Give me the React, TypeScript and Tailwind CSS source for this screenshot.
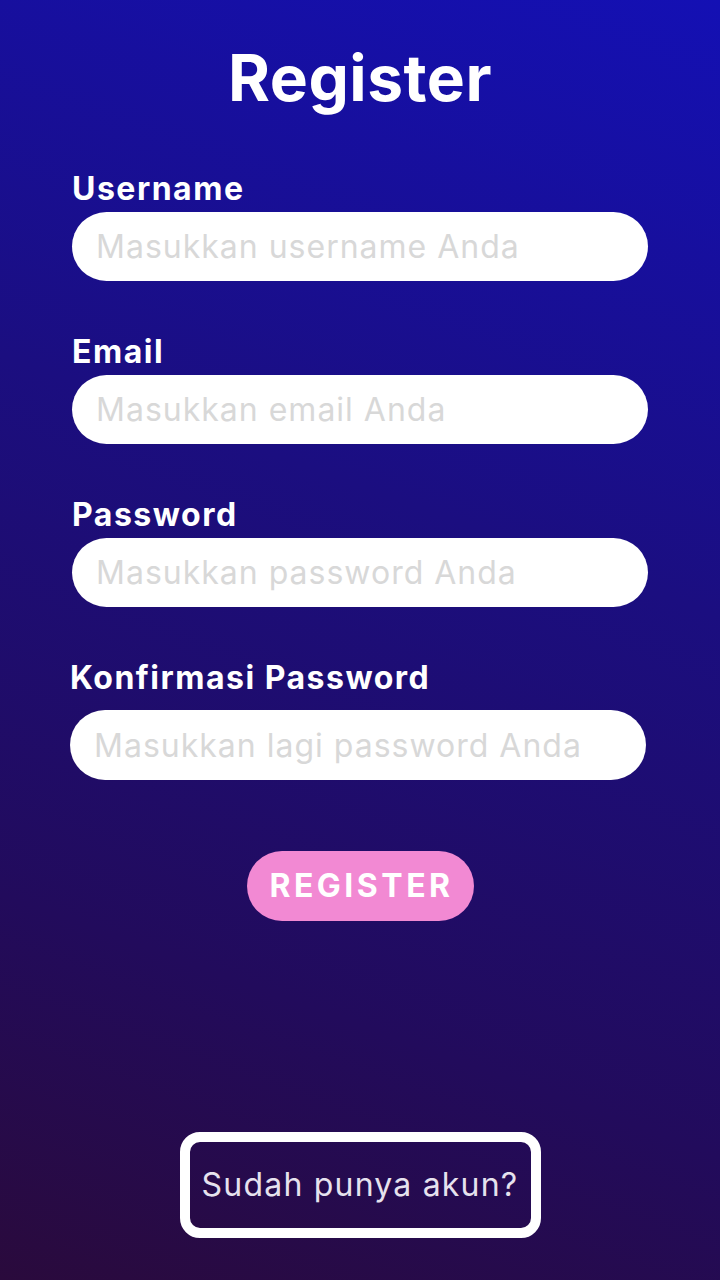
import React from "react";

interface Field {
    id: string;
    label: string;
    placeholder: string;
    type: string;
    wrap: string;
}

const fields: Field[] = [
    { id: "username", label: "Username", placeholder: "Masukkan username Anda", type: "text", wrap: "mt-[54px] mx-[72px]" },
    { id: "email", label: "Email", placeholder: "Masukkan email Anda", type: "email", wrap: "mt-[52px] mx-[72px]" },
    { id: "password", label: "Password", placeholder: "Masukkan password Anda", type: "password", wrap: "mt-[52px] mx-[72px]" },
    { id: "confirm", label: "Konfirmasi Password", placeholder: "Masukkan lagi password Anda", type: "password", wrap: "mt-[52px] ml-[70px] mr-[74px]" },
];

const FormField: React.FC<Field> = ({ id, label, placeholder, type, wrap }) => (
    <div className={`flex flex-col ${wrap}`}>
        <label htmlFor={id} className="text-[32px] leading-[38px] font-bold tracking-[1.5px] text-white">
            {label}
        </label>
        <input
            id={id}
            type={type}
            placeholder={placeholder}
            className={`w-full rounded-full bg-white px-6 text-[32px] tracking-[1px] text-gray-800 outline-none placeholder:text-[#d8d8d8] ${
                id === "confirm" ? "mt-[13px] h-[70px]" : "mt-1 h-[69px]"
            }`}
        />
    </div>
);

const App: React.FC = () => (
    <div
        className="flex h-[1280px] w-full flex-col bg-[linear-gradient(200deg,#1410b4_0%,#1b0e80_40%,#220b5c_75%,#2a0a3c_100%)]"
        style={{ fontFamily: "Inter, 'Open Sans', sans-serif" }}
    >
        <h1 className="mt-[40px] text-center text-[64px] leading-[76px] font-bold tracking-[0.5px] text-white">Register</h1>
        {fields.map((f) => (
            <FormField key={f.id} {...f} />
        ))}
        <div className="mt-[71px] flex justify-center">
            <button className="h-[70px] w-[227px] rounded-full bg-[#f289d3] pl-[3px] text-[32px] font-bold tracking-[3.5px] text-white">
                REGISTER
            </button>
        </div>
        <div className="mt-auto mb-[42px] flex justify-center">
            <button className="flex h-[106px] w-[361px] items-center justify-center rounded-[20px] border-[10px] border-white text-[32px] tracking-[1.2px] text-[#e6e2ee]">
                Sudah punya akun?
            </button>
        </div>
    </div>
);

export default App;
